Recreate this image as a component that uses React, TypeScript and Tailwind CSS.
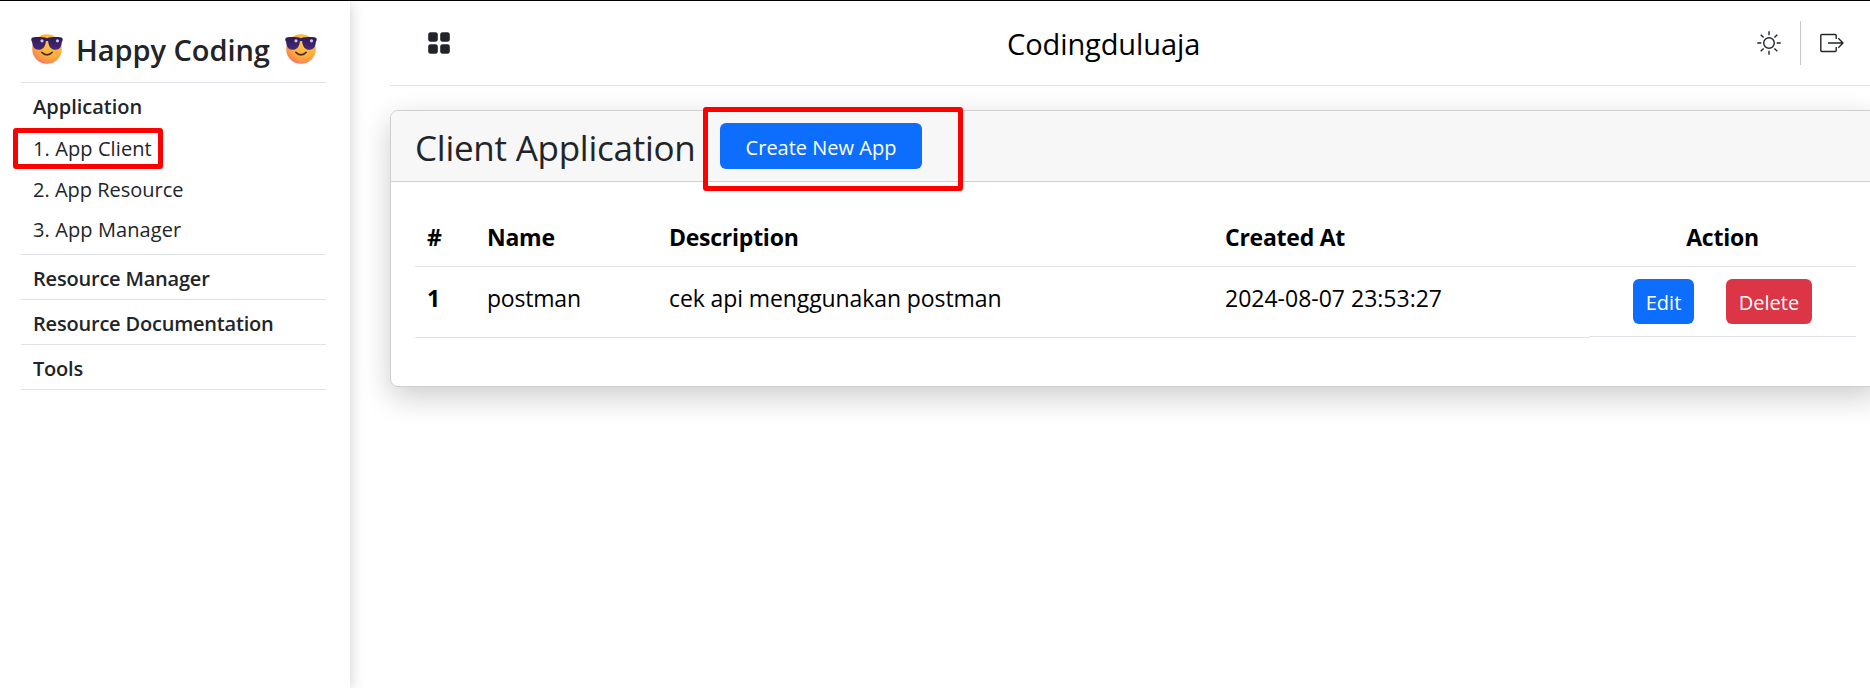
import type { ReactNode } from "react";

function CoolFace() {
  return (
    <svg viewBox="0 0 32 30" className="h-[30px] w-8 shrink-0">
      <defs>
        <radialGradient id="face" cx="0.62" cy="0.3" r="0.78">
          <stop offset="0" stopColor="#ffc93c" />
          <stop offset="0.6" stopColor="#ffad3a" />
          <stop offset="0.85" stopColor="#f98a4e" />
          <stop offset="1" stopColor="#ee5f8f" />
        </radialGradient>
        <linearGradient id="lens" x1="0" y1="0" x2="0" y2="1">
          <stop offset="0" stopColor="#2d1b55" />
          <stop offset="1" stopColor="#47277c" />
        </linearGradient>
      </defs>
      <circle cx="16" cy="15" r="14.8" fill="url(#face)" />
      <path
        d="M0.6 4.2C1.5 3 4 3 7 3c3.5 0 6.500 0 9 1.300C18.500 3 21.500 3 25 3c3 0 5.500 0 6.400 1.200.6 1 .4 2.600-.5 3.600C30.500 13 28.500 15.800 24.500 15.800c-4.300 0-6.800-3-7.300-8.300-.8-.6-1.600-.6-2.400 0-.5 5.300-3 8.300-7.300 8.300C3.500 15.800 1.500 13 1.100 7.800.2 6.800 0 5.200.6 4.200z"
        fill="url(#lens)"
      />
      <circle cx="11" cy="6.800" r="1.600" fill="#cfc4e6" />
      <circle cx="26.500" cy="6.800" r="1.600" fill="#cfc4e6" />
      <path d="M10.800 18.300c2.600 3.300 7.800 3.300 10.400 0" fill="none" stroke="#4b2a3a" strokeWidth="1.700" strokeLinecap="round" />
    </svg>
  );
}

function GridIcon() {
  return (
    <svg viewBox="0 0 22 22" className="size-[22px]" fill="#212529">
      <rect x="0.200" y="0.200" width="9.600" height="9.600" rx="2.400" />
      <rect x="12.200" y="0.200" width="9.600" height="9.600" rx="2.400" />
      <rect x="0.200" y="12.200" width="9.600" height="9.600" rx="2.400" />
      <rect x="12.200" y="12.200" width="9.600" height="9.600" rx="2.400" />
    </svg>
  );
}

function SunIcon() {
  return (
    <svg viewBox="0 0 24 24" className="size-6" fill="none" stroke="#212529" strokeWidth="1.400">
      <circle cx="12" cy="12" r="5.300" />
      <path d="M12 .3v4M12 19.700v4M.3 12h4M19.700 12h4M3.700 3.700l2.900 2.900M17.400 17.400l2.900 2.900M3.700 20.300l2.900-2.900M17.400 6.600l2.900-2.900" />
    </svg>
  );
}

function LogoutIcon() {
  return (
    <svg viewBox="0 0 24 20" className="h-5 w-6" fill="none" stroke="#212529" strokeWidth="1.400" strokeLinejoin="round">
      <path d="M16.200 6V2.500a1 1 0 0 0-1-1H1.800a1 1 0 0 0-1 1v15a1 1 0 0 0 1 1h13.400a1 1 0 0 0 1-1V14" />
      <path d="M8 10h15M18.300 5.300 23 10l-4.700 4.700" />
    </svg>
  );
}

function Section({ children }: { children: ReactNode }) {
  return (
    <div className="flex h-[45px] items-center border-b border-[#dee2e6] pt-1 pl-3 text-[20px] font-semibold tracking-[-0.2px]">
      {children}
    </div>
  );
}

export default function App() {
  return (
    <div className="flex h-[688px] w-full overflow-hidden border-t border-black bg-white font-['Open_Sans','Noto_Sans',sans-serif] whitespace-nowrap text-[#212529]">
      <aside className="relative w-[350px] shrink-0 pr-6 pl-[21px] shadow-[0_2px_14px_rgba(0,0,0,0.2)]">
        <div className="flex h-[82px] items-center border-b border-[#dee2e6] pt-[15px] pl-[10px]">
          <CoolFace />
          <h1 className="w-[222px] pt-px pl-[13px] text-[29px] font-semibold tracking-[-0.05px]">Happy Coding</h1>
          <CoolFace />
        </div>
        <nav>
          <div className="border-b border-[#dee2e6] pb-[5px]">
            <div className="flex h-[45px] items-center pt-[2px] pl-3 text-[20px] font-semibold">
              <span>Application</span>
            </div>
            <div className="relative flex h-[40.500px] items-center pt-[2px] pl-3 text-[20px] tracking-[0.1px]">
              <span>1. App Client</span>
              <div className="absolute top-0 -left-2 h-[41px] w-[150px] rounded-[3px] border-5 border-[#ff0000]" />
            </div>
            <div className="flex h-[40.500px] items-center pt-[2px] pl-3 text-[20px]">
              <span>2. App Resource</span>
            </div>
            <div className="flex h-10 items-center pt-[2px] pl-3 text-[20px] tracking-[0.1px]">
              <span>3. App Manager</span>
            </div>
          </div>
          <Section><span>Resource Manager</span></Section>
          <Section><span>Resource Documentation</span></Section>
          <Section><span>Tools</span></Section>
        </nav>
      </aside>

      <main className="w-[1520px] shrink-0 pl-10">
        <header className="flex h-[85px] items-center border-b border-[#dee2e6] pl-[38px]">
          <GridIcon />
          <div className="ml-[557px] w-[750px] pt-[2px] text-[29px] tracking-[-0.1px] text-black">
            <span>Codingduluaja</span>
          </div>
          <SunIcon />
          <div className="mr-[19px] ml-[19px] h-11 w-px bg-[#c6c7c8]" />
          <LogoutIcon />
        </header>

        <section className="mt-6 h-[277px] w-[1490px] rounded-lg border border-[#cfcfcf] bg-white shadow-[0_10px_30px_rgba(0,0,0,0.2)]">
          <div className="flex h-[71px] items-center rounded-t-[7px] border-b border-[#cfcfcf] bg-[#f7f7f7] pl-6">
            <h2 className="w-[305px] pt-[4px] text-[35px] tracking-[-0.25px]"><span>Client Application</span></h2>
            <div className="relative flex">
              <button className="h-[46px] w-[202px] rounded-[6px] bg-[#0d6efd] pt-[3px] text-[20px] text-white">
                <span>Create New App</span>
              </button>
              <div className="absolute -top-4 -left-[17px] h-[84px] w-[260px] rounded-[3px] border-5 border-[#ff0000]" />
            </div>
          </div>
          <div className="pt-[25px] pl-6">
            <div className="grid h-[60px] w-[1441px] grid-cols-[72px_182px_556px_364px_267px] items-center border-b border-[#dee2e6] pt-[2px] text-[23px] font-bold tracking-[-0.25px] text-black">
              <span className="pl-3">#</span>
              <div><span>Name</span></div>
              <div><span>Description</span></div>
              <div><span>Created At</span></div>
              <div className="text-center"><span>Action</span></div>
            </div>
            <div className="grid w-[1441px] grid-cols-[72px_182px_556px_364px_267px] items-start text-[23px] text-black">
              <div className="h-[71px] border-b border-[#dee2e6] pt-[14px] pl-3 font-bold">1</div>
              <div className="h-[71px] border-b border-[#dee2e6] pt-[14px] tracking-[-0.2px]"><span>postman</span></div>
              <div className="h-[71px] border-b border-[#dee2e6] pt-[14px] tracking-[-0.1px]"><span>cek api menggunakan postman</span></div>
              <div className="h-[71px] border-b border-[#dee2e6] pt-[14px]"><span>2024-08-07 23:53:27</span></div>
              <div className="flex h-[70px] gap-8 border-b border-[#dee2e6] pt-3 pl-11 text-[20px] text-white">
                <button className="h-[45px] w-[61px] rounded-[6px] bg-[#0d6efd] pt-[2px]"><span>Edit</span></button>
                <button className="h-[45px] w-[86px] rounded-[6px] bg-[#dc3545] pt-[2px]"><span>Delete</span></button>
              </div>
            </div>
          </div>
        </section>
      </main>
    </div>
  );
}
